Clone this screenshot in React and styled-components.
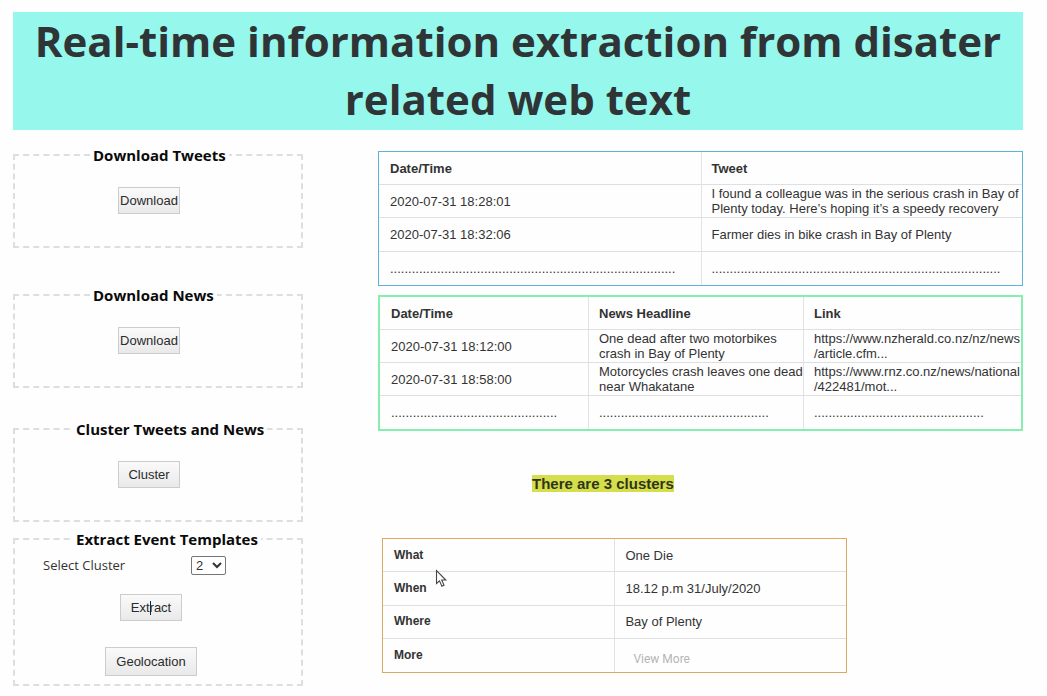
import React from "react";
import styled, { createGlobalStyle } from "styled-components";

const GlobalStyle = createGlobalStyle`
  * { box-sizing: border-box; }
  body {
    margin: 0;
    background: #fefefe;
    color: #333;
    font: 13px/15px "Liberation Sans", Arial, sans-serif;
  }
`;

const Page = styled.div`
  padding: 12px 24px 10px 13px;
`;

const Title = styled.h1`
  margin: 0 0 21px;
  padding: 0 8px 2px;
  background: #96f7ec;
  color: #2f3436;
  font: bold 42px/58px "Open Sans", sans-serif;
  text-align: center;
`;

const Columns = styled.main`
  display: grid;
  grid-template-columns: minmax(0, 290fr) minmax(0, 645fr);
  column-gap: 75px;
  align-items: start;
`;

const Sidebar = styled.div`
  margin-top: -6px;
`;

const Panel = styled.fieldset`
  margin: 0 0 ${(p) => p.$after}px;
  padding: 22px 0 32px;
  min-width: 0;
  border: 2px dashed #dcdfdf;
`;

const TemplatePanel = styled(Panel)`
  padding: 6px 0 8px;
`;

const PanelTitle = styled.legend`
  margin-left: ${(p) => p.$indent}px;
  padding: 0 3px;
  color: #0a0a0a;
  font: bold 15px/20px "Open Sans", sans-serif;
`;

const Actions = styled.div`
  display: flex;
  flex-direction: column;
  align-items: center;
  gap: 26px;
  padding-right: ${(p) => p.$inset}px;
`;

const Button = styled.button`
  position: relative;
  height: ${(p) => (p.$large ? 29 : 27)}px;
  min-width: 62px;
  padding: 0 ${(p) => (p.$large ? 10 : 1)}px;
  border: 1px solid #ccc;
  background: linear-gradient(#fafafa, #e9e9e9);
  color: #2b2b2b;
  font: 13px/15px "Liberation Sans", Arial, sans-serif;
`;

const Caret = styled.span`
  position: absolute;
  left: 29px;
  top: 6px;
  width: 1px;
  height: 14px;
  background: #222;
`;

const SelectRow = styled.div`
  display: flex;
  align-items: center;
  height: 20px;
  margin-bottom: 19px;
  padding-left: 28px;
`;

const SelectLabel = styled.label`
  width: 148px;
  font: 13px/20px "Open Sans", sans-serif;
`;

const Select = styled.select`
  width: 35px;
  height: 19px;
  padding: 0;
  border: 1px solid #767676;
  border-radius: 2px;
  background: #fff;
  color: #333;
  font: 13px/16px "Liberation Sans", Arial, sans-serif;
`;

const Table = styled.table`
  width: 100%;
  height: 135px;
  margin-bottom: 9px;
  border: ${(p) => p.$line}px solid ${(p) => p.$color};
  border-spacing: 0;
  table-layout: fixed;
`;

const Column = styled.col`
  width: ${(p) => p.$share};
`;

const cell = `
  height: 33px;
  padding: 0 0 0 10px;
  text-align: left;
  vertical-align: middle;
  border-bottom: 1px solid #dddfe0;
  tbody > tr:last-child > & { border-bottom: 0; }
  &:first-child { padding-left: 11px; }
  & + * { border-left: 1px solid #e2e3e6; }
`;

const Th = styled.th`
  ${cell}
`;

const RowTh = styled(Th)`
  font-size: 12px;
`;

const Td = styled.td`
  ${cell}
`;

const Dots = styled.span`
  display: block;
  white-space: nowrap;
`;

const CellLink = styled.a`
  color: inherit;
  text-decoration: none;
`;

const ClusterNote = styled.p`
  margin: 44px 0 46px;
  padding-left: 154px;
  color: #30351a;
  font: bold 15px/17px "Liberation Sans", Arial, sans-serif;

  mark {
    background: #d5de4b;
    color: inherit;
  }
`;

const TemplateWrap = styled.div`
  position: relative;
  width: 73%;
  padding: 0 2px 0 4px;
`;

const ViewMore = styled(CellLink)`
  display: block;
  padding: 8px 0 0 8px;
  color: #b5b5b5;
  font: 12px/14px Roboto, sans-serif;
`;

const Pointer = styled.svg`
  position: absolute;
  left: 57px;
  top: 31px;
`;

const dots = (n) => <Dots>{".".repeat(n)}</Dots>;

export default function App() {
  return (
    <>
      <GlobalStyle />
      <Page>
        <Title>Real-time information extraction from disater related web text</Title>
        <Columns>
          <Sidebar>
            <Panel $after={37}>
              <PanelTitle $indent={75}>Download Tweets</PanelTitle>
              <Actions $inset={18}>
                <Button type="button">Download</Button>
              </Actions>
            </Panel>
            <Panel $after={31}>
              <PanelTitle $indent={75}>Download News</PanelTitle>
              <Actions $inset={18}>
                <Button type="button">Download</Button>
              </Actions>
            </Panel>
            <Panel $after={7}>
              <PanelTitle $indent={58}>Cluster Tweets and News</PanelTitle>
              <Actions $inset={18}>
                <Button type="button">Cluster</Button>
              </Actions>
            </Panel>
            <TemplatePanel $after={0}>
              <PanelTitle $indent={58}>Extract Event Templates</PanelTitle>
              <SelectRow>
                <SelectLabel htmlFor="cluster">Select Cluster</SelectLabel>
                <Select id="cluster" defaultValue="2">
                  <option>1</option>
                  <option>2</option>
                  <option>3</option>
                </Select>
              </SelectRow>
              <Actions $inset={14}>
                <Button type="button">
                  Extract
                  <Caret />
                </Button>
                <Button type="button" $large>Geolocation</Button>
              </Actions>
            </TemplatePanel>
          </Sidebar>

          <section>
            <Table $line={1} $color="#5db4d8">
              <colgroup>
                <Column $share="50%" />
                <Column $share="50%" />
              </colgroup>
              <thead>
                <tr>
                  <Th scope="col">Date/Time</Th>
                  <Th scope="col">Tweet</Th>
                </tr>
              </thead>
              <tbody>
                <tr>
                  <Td>2020-07-31 18:28:01</Td>
                  <Td>I found a colleague was in the serious crash in Bay of Plenty today. Here’s hoping it’s a speedy recovery</Td>
                </tr>
                <tr>
                  <Td>2020-07-31 18:32:06</Td>
                  <Td>Farmer dies in bike crash in Bay of Plenty</Td>
                </tr>
                <tr>
                  <Td>{dots(79)}</Td>
                  <Td>{dots(80)}</Td>
                </tr>
              </tbody>
            </Table>

            <Table $line={2} $color="#86efb0">
              <colgroup>
                <Column $share="auto" />
                <Column $share="215px" />
                <Column $share="218px" />
              </colgroup>
              <thead>
                <tr>
                  <Th scope="col">Date/Time</Th>
                  <Th scope="col">News Headline</Th>
                  <Th scope="col">Link</Th>
                </tr>
              </thead>
              <tbody>
                <tr>
                  <Td>2020-07-31 18:12:00</Td>
                  <Td>One dead after two motorbikes crash in Bay of Plenty</Td>
                  <Td>
                    <CellLink href="#nzherald">https://www.nzherald.co.nz/nz/news<wbr />/article.cfm...</CellLink>
                  </Td>
                </tr>
                <tr>
                  <Td>2020-07-31 18:58:00</Td>
                  <Td>Motorcycles crash leaves one dead near Whakatane</Td>
                  <Td>
                    <CellLink href="#rnz">https://www.rnz.co.nz/news/national<wbr />/422481/mot...</CellLink>
                  </Td>
                </tr>
                <tr>
                  <Td>{dots(46)}</Td>
                  <Td>{dots(47)}</Td>
                  <Td>{dots(47)}</Td>
                </tr>
              </tbody>
            </Table>

            <ClusterNote>
              <mark>There are 3 clusters</mark>
            </ClusterNote>

            <TemplateWrap>
              <Table $line={1} $color="#e0a763">
                <tbody>
                  <tr>
                    <RowTh scope="row">What</RowTh>
                    <Td>One Die</Td>
                  </tr>
                  <tr>
                    <RowTh scope="row">When</RowTh>
                    <Td>18.12 p.m 31/July/2020</Td>
                  </tr>
                  <tr>
                    <RowTh scope="row">Where</RowTh>
                    <Td>Bay of Plenty</Td>
                  </tr>
                  <tr>
                    <RowTh scope="row">More</RowTh>
                    <Td>
                      <ViewMore href="#more">View More</ViewMore>
                    </Td>
                  </tr>
                </tbody>
              </Table>
              <Pointer width="13" height="20" viewBox="0 0 13 20" aria-hidden="true">
                <path d="M1.5 1.5V14.5L4.5 11.8L6.9 17.2L9 16.2L6.7 11H10.8Z" fill="#fff" stroke="#4a4448" strokeWidth="1.1" />
              </Pointer>
            </TemplateWrap>
          </section>
        </Columns>
      </Page>
    </>
  );
}
